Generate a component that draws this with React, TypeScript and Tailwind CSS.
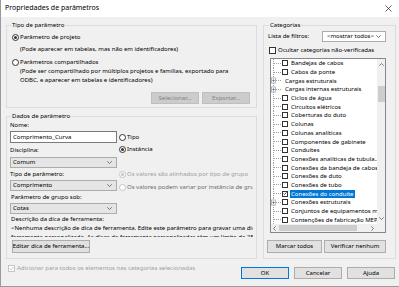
type RowItem = { label: string; expand?: boolean; check?: boolean; checked?: boolean; selected?: boolean };

const treeRows: RowItem[] = [
  { label: 'Bandejas de cabos', check: true },
  { label: 'Cabos da ponte', check: true },
  { label: 'Cargas estruturais', expand: true },
  { label: 'Cargas internas estruturais', expand: true },
  { label: 'Ciclos de água', check: true },
  { label: 'Circuitos elétricos', check: true },
  { label: 'Coberturas do duto', check: true },
  { label: 'Colunas', check: true },
  { label: 'Colunas analíticas', check: true },
  { label: 'Componentes de gabinete', check: true },
  { label: 'Conduítes', check: true },
  { label: 'Conexões analíticas de tubula...', check: true },
  { label: 'Conexões da bandeja de cabos', check: true },
  { label: 'Conexões de duto', check: true },
  { label: 'Conexões de tubo', check: true },
  { label: 'Conexões do conduíte', check: true, checked: true, selected: true },
  { label: 'Conexões estruturais', expand: true, check: true },
  { label: 'Conjuntos de equipamentos mecânicos', check: true },
  { label: 'Contenções de fabricação MEP', check: true },
];

function Radio({ checked = false, disabled = false }: { checked?: boolean; disabled?: boolean }) {
  return (
    <span
      className={`flex h-[7px] w-[7px] shrink-0 items-center justify-center rounded-full border bg-white ${
        disabled ? 'border-[#c4c4c4]' : 'border-[#333333]'
      }`}
    >
      {checked && <span className={`h-[3px] w-[3px] rounded-full ${disabled ? 'bg-[#c4c4c4]' : 'bg-[#333333]'}`} />}
    </span>
  );
}

function Check({ checked = false, disabled = false, small = false }: { checked?: boolean; disabled?: boolean; small?: boolean }) {
  return (
    <span
      className={`flex shrink-0 items-center justify-center border bg-white ${small ? 'h-[6px] w-[6px]' : 'h-[7px] w-[7px]'} ${
        disabled ? 'border-[#c4c4c4]' : 'border-[#333333]'
      }`}
    >
      {checked && (
        <svg width="5" height="5" viewBox="0 0 5 5">
          <polyline points="0.6,2.6 1.9,3.9 4.4,1" fill="none" stroke={disabled ? '#c4c4c4' : '#222'} strokeWidth="1" />
        </svg>
      )}
    </span>
  );
}

function Chevron() {
  return (
    <svg width="5" height="3" viewBox="0 0 5 3" className="shrink-0">
      <polyline points="0.3,0.3 2.5,2.5 4.7,0.3" fill="none" stroke="#555" strokeWidth="0.8" />
    </svg>
  );
}

function Select({ value, white = false, className = '' }: { value: string; white?: boolean; className?: string }) {
  return (
    <div
      className={`flex h-[11px] items-center justify-between border border-[#acacac] pr-[4px] pl-[2px] whitespace-nowrap ${
        white ? 'bg-white' : 'bg-[#e5e5e5]'
      } ${className}`}
    >
      <span className="leading-[9px]">{value}</span>
      <Chevron />
    </div>
  );
}

function Btn({ label, disabled = false, focused = false, className = '' }: { label: string; disabled?: boolean; focused?: boolean; className?: string }) {
  return (
    <div
      className={`flex shrink-0 items-center justify-center border leading-[9px] whitespace-nowrap ${
        disabled
          ? 'border-[#bfbfbf] bg-[#cccccc] text-[#838383]'
          : focused
            ? 'border-[#0078d7] bg-[#e1e1e1]'
            : 'border-[#adadad] bg-[#e1e1e1]'
      } ${className}`}
    >
      {label}
    </div>
  );
}

function TreeLines({ expand }: { expand?: boolean }) {
  return (
    <svg width="11" height="9" viewBox="0 0 11 9" className="shrink-0">
      {expand ? (
        <>
          <line x1="2.5" y1="0" x2="2.5" y2="2" stroke="#a0a0a0" strokeDasharray="1 1" />
          <line x1="2.5" y1="7" x2="2.5" y2="9" stroke="#a0a0a0" strokeDasharray="1 1" />
          <rect x="0.5" y="2" width="4" height="5" fill="#fff" stroke="#9a9a9a" strokeWidth="0.7" />
          <line x1="1.3" y1="4.5" x2="3.7" y2="4.5" stroke="#3a5a9a" strokeWidth="0.7" />
          <line x1="2.5" y1="3.3" x2="2.5" y2="5.7" stroke="#3a5a9a" strokeWidth="0.7" />
          <line x1="5" y1="4.5" x2="11" y2="4.5" stroke="#a0a0a0" strokeDasharray="1 1" />
        </>
      ) : (
        <>
          <line x1="2.5" y1="0" x2="2.5" y2="9" stroke="#a0a0a0" strokeDasharray="1 1" />
          <line x1="3" y1="4.5" x2="11" y2="4.5" stroke="#a0a0a0" strokeDasharray="1 1" />
        </>
      )}
    </svg>
  );
}

export default function App() {
  return (
    <div className="flex h-[287px] w-[399px] flex-col overflow-hidden border-b border-l border-[#9a9a9a] bg-[#f0f0f0] font-['Noto_Sans',sans-serif] text-[6px] text-black">
      {/* title bar */}
      <div className="flex h-[17px] shrink-0 items-center justify-between bg-white pr-[7px] pl-[4px]">
        <span className="text-[7px]">Propriedades de parâmetros</span>
        <svg width="7" height="7" viewBox="0 0 7 7">
          <line x1="0.5" y1="0.5" x2="6.5" y2="6.5" stroke="#222" strokeWidth="0.7" />
          <line x1="6.5" y1="0.5" x2="0.5" y2="6.5" stroke="#222" strokeWidth="0.7" />
        </svg>
      </div>

      <div className="flex pt-[3px] pl-[5px]">
        {/* left column */}
        <div className="flex w-[251px] shrink-0 flex-col">
          <fieldset className="min-w-0 border border-[#dcdcdc] px-[3px] pb-[3px]">
            <legend className="ml-[1px] h-[10px] px-[1px] leading-[10px]">Tipo de parâmetro</legend>
            <div className="flex flex-col">
              <div className="mt-[2px] flex h-[10px] items-center gap-[1px] pl-[2px]">
                <Radio checked />
                <span>Parâmetro de projeto</span>
              </div>
              <div className="mt-[2px] h-[10px] pl-[10px] leading-[10px]">
                (Pode aparecer em tabelas, mas não em identificadores)
              </div>
              <div className="mt-[3px] flex h-[10px] items-center gap-[1px] pl-[2px]">
                <Radio />
                <span>Parâmetros compartilhados</span>
              </div>
              <div className="pl-[10px] leading-[9px] whitespace-nowrap">
                <div>(Pode ser compartilhado por múltiplos projetos e famílias, exportado para</div>
                <div>ODBC, e aparecer em tabelas e identificadores)</div>
              </div>
              <div className="mt-[7px] flex justify-end gap-[3px] pr-[3px]">
                <Btn label="Selecionar..." disabled className="h-[12px] w-[48px]" />
                <Btn label="Exportar..." disabled className="h-[12px] w-[48px]" />
              </div>
            </div>
          </fieldset>

          <fieldset className="mt-[3px] min-w-0 border border-[#dcdcdc] px-[3px] pb-[5px]">
            <legend className="ml-[1px] h-[10px] px-[1px] leading-[10px]">Dados de parâmetro</legend>
            <div className="flex">
              <div className="flex w-[107px] shrink-0 flex-col">
                <div className="h-[9px] leading-[9px]">Nome:</div>
                <div className="mt-[1px] flex h-[12px] items-center border border-[#7a7a7a] bg-white pl-[2px]">
                  Comprimento_Curva
                </div>
                <div className="mt-[3px] h-[9px] leading-[9px]">Disciplina:</div>
                <Select value="Comum" className="mt-[2px]" />
                <div className="mt-[2px] h-[9px] leading-[9px]">Tipo de parâmetro:</div>
                <Select value="Comprimento" className="mt-[1px]" />
                <div className="mt-[2px] h-[9px] pl-[1px] leading-[9px]">Parâmetro de grupo sob:</div>
                <Select value="Cotas" className="mt-[1px]" />
              </div>
              <div className="ml-[2px] flex min-w-0 flex-col overflow-hidden whitespace-nowrap">
                <div className="mt-[11px] flex h-[10px] items-center gap-[1px]">
                  <Radio />
                  <span>Tipo</span>
                </div>
                <div className="mt-[2px] flex h-[10px] items-center gap-[1px]">
                  <Radio checked />
                  <span>Instância</span>
                </div>
                <div className="mt-[15px] flex h-[10px] items-center gap-[1px] text-[#a0a0a0]">
                  <Radio checked disabled />
                  <span>Os valores são alinhados por tipo de grupo</span>
                </div>
                <div className="mt-[3px] flex h-[10px] items-center gap-[1px] text-[#6d6d6d]">
                  <Radio disabled />
                  <span>Os valores podem variar por instância de grupo</span>
                </div>
              </div>
            </div>
            <div className="mt-[1px] h-[9px] pl-[1px] leading-[9px]">Descrição da dica de ferramenta:</div>
            <div className="h-[13px] overflow-hidden pl-[1px] leading-[9px] whitespace-nowrap">
              <div>&lt;Nenhuma descrição de dica de ferramenta. Edite este parâmetro para gravar uma dica de</div>
              <div>ferramenta personalizada. As dicas de ferramenta personalizadas têm um limite de 250</div>
            </div>
            <Btn label="Editar dica de ferramenta..." className="mt-[3px] ml-[2px] h-[13px] w-[78px]" />
          </fieldset>
        </div>

        {/* right column */}
        <fieldset className="ml-[6px] w-[133px] min-w-0 shrink-0 border border-[#dcdcdc] pr-[9px] pb-[5px] pl-[4px]">
          <legend className="ml-[1px] h-[10px] px-[1px] leading-[10px]">Categorias</legend>
          <div className="mt-[1px] flex h-[11px] items-center justify-between">
            <span className="whitespace-nowrap">Lista de filtros:</span>
            <Select value="<mostrar todos>" white className="w-[64px] pl-[4px]" />
          </div>
          <div className="mt-[3px] flex h-[10px] items-center gap-[2px] pl-[1px] whitespace-nowrap">
            <Check />
            <span>Ocultar categorias não-verificadas</span>
          </div>
          <div className="mt-[3px] ml-[2px] flex h-[175px] flex-col border border-[#828790] bg-white">
            <div className="flex h-[165px]">
              <div className="flex min-w-0 flex-1 flex-col overflow-hidden">
                {treeRows.map((r) => (
                  <div key={r.label} className="flex h-[8.7px] shrink-0 items-center whitespace-nowrap">
                    <TreeLines expand={r.expand} />
                    {r.check && <Check small checked={r.checked} />}
                    <span className={`ml-[2px] px-[1px] leading-[8px] ${r.selected ? 'bg-[#0078d7] text-white' : ''}`}>
                      {r.label}
                    </span>
                  </div>
                ))}
              </div>
              <div className="flex w-[8px] shrink-0 flex-col items-center bg-[#f0f0f0]">
                <svg width="5" height="3" viewBox="0 0 5 3" className="mt-[4px]">
                  <polyline points="0.3,2.7 2.5,0.5 4.7,2.7" fill="none" stroke="#606060" strokeWidth="0.8" />
                </svg>
                <div className="mt-[20px] h-[16px] w-[7px] bg-[#cdcdcd]" />
                <div className="flex-1" />
                <svg width="5" height="3" viewBox="0 0 5 3" className="mb-[4px]">
                  <polyline points="0.3,0.3 2.5,2.5 4.7,0.3" fill="none" stroke="#606060" strokeWidth="0.8" />
                </svg>
              </div>
            </div>
            <div className="flex h-[8px] bg-[#f0f0f0]">
              <div className="flex flex-1 items-center">
                <svg width="3" height="5" viewBox="0 0 3 5" className="ml-[2px]">
                  <polyline points="2.7,0.3 0.5,2.5 2.7,4.7" fill="none" stroke="#606060" strokeWidth="0.8" />
                </svg>
                <div className="ml-[3px] h-[6px] w-[78px] bg-[#cdcdcd]" />
                <div className="flex-1" />
                <svg width="3" height="5" viewBox="0 0 3 5" className="mr-[3px]">
                  <polyline points="0.3,0.3 2.5,2.5 0.3,4.7" fill="none" stroke="#606060" strokeWidth="0.8" />
                </svg>
              </div>
              <div className="w-[8px] bg-[#f0f0f0]" />
            </div>
          </div>
          <div className="mt-[7px] ml-[-1px] flex justify-between">
            <Btn label="Marcar todos" className="h-[13px] w-[55px]" />
            <Btn label="Verificar nenhum" className="h-[13px] w-[62px]" />
          </div>
        </fieldset>
      </div>

      {/* bottom row */}
      <div className="flex items-start pr-[4px] pl-[7px]">
        <div className="mt-[4px] flex h-[10px] items-center gap-[2px] whitespace-nowrap text-[#a0a0a0]">
          <Check checked disabled />
          <span>Adicionar para todos os elementos nas categorias selecionadas</span>
        </div>
        <div className="flex-1" />
        <div className="mt-[8px] flex gap-[5px]">
          <Btn label="OK" focused className="h-[12px] w-[48px]" />
          <Btn label="Cancelar" className="h-[12px] w-[48px]" />
          <Btn label="Ajuda" className="h-[12px] w-[48px]" />
        </div>
      </div>
    </div>
  );
}
